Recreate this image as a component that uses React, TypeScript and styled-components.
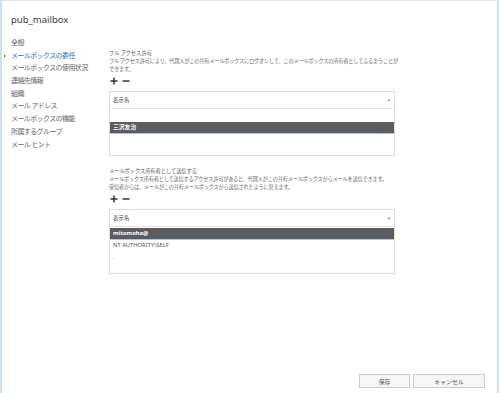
import React from 'react'
import styled, { createGlobalStyle } from 'styled-components'

const GlobalStyle = createGlobalStyle`
  html, body {
    margin: 0;
    padding: 0;
    background: #ffffff;
  }
  body {
    font-family: "Noto Sans", "Noto Sans CJK JP", sans-serif;
    color: #444444;
  }
`

const Frame = styled.div`
  box-sizing: border-box;
  width: 499px;
  height: 393px;
  display: flex;
  flex-direction: column;
  border-top: 1px solid #e4e4e4;
  border-left: 2px solid #cde1f3;
  border-right: 2px solid #cde1f3;
  background: #ffffff;
`

const Title = styled.div`
  margin: 12px 0 0 9px;
  height: 14px;
  line-height: 14px;
  font-size: 9.5px;
  color: #3a3a3a;
`

const Body = styled.div`
  display: flex;
  margin-top: 10px;
`

const Nav = styled.ul`
  list-style: none;
  margin: 0;
  padding: 0;
  width: 107px;
  flex-shrink: 0;
`

const NavItem = styled.li<{ $active?: boolean }>`
  position: relative;
  padding-left: 9px;
  height: 12.7px;
  line-height: 12.7px;
  font-size: 7px;
  letter-spacing: -0.6px;
  white-space: nowrap;
  color: ${({ $active }) => ($active ? '#2d6fba' : '#666666')};

  &::before {
    content: '';
    display: ${({ $active }) => ($active ? 'block' : 'none')};
    position: absolute;
    left: 2px;
    top: 5px;
    border-left: 2.5px solid #333333;
    border-top: 1.5px solid transparent;
    border-bottom: 1.5px solid transparent;
  }
`

const Content = styled.div`
  width: 286px;
  padding-top: 12px;
`

const Section = styled.section`
  & + & {
    margin-top: 11px;
  }
`

const SectionTitle = styled.div`
  font-size: 5.2px;
  line-height: 8px;
  color: #555555;
  white-space: nowrap;
`

const Description = styled.div`
  font-size: 5.2px;
  line-height: 8px;
  color: #666666;
  letter-spacing: -0.2px;
  white-space: nowrap;
`

const Toolbar = styled.div`
  display: flex;
  align-items: center;
  gap: 4px;
  height: 10px;
  margin: 3px 0 5px 1px;
`

const IconButton = styled.span`
  display: flex;
  width: 8px;
  height: 8px;
`

const Table = styled.div`
  box-sizing: border-box;
  height: 65px;
  border: 1px solid #dedede;
`

const HeaderRow = styled.div`
  display: flex;
  align-items: center;
  justify-content: space-between;
  height: 16px;
  padding: 0 4px 0 3px;
  border-bottom: 1px solid #e6e6e6;
  font-size: 5.5px;
  color: #444444;
`

const SortArrow = styled.span`
  width: 0;
  height: 0;
  border-left: 1.5px solid transparent;
  border-right: 1.5px solid transparent;
  border-bottom: 2px solid #555555;
`

const Rows = styled.div<{ $offset: number }>`
  padding-top: ${({ $offset }) => $offset}px;
`

const Row = styled.div<{ $selected?: boolean; $muted?: boolean }>`
  box-sizing: border-box;
  height: ${({ $selected }) => ($selected ? 12 : 13)}px;
  line-height: 11px;
  padding-left: 3px;
  font-size: 5.8px;
  white-space: nowrap;
  font-weight: ${({ $selected }) => ($selected ? 700 : 400)};
  color: ${({ $selected, $muted }) => ($selected ? '#ffffff' : $muted ? '#aaaaaa' : '#555555')};
  background: ${({ $selected }) => ($selected ? '#5b5b60' : 'transparent')};
  border-bottom: 1px solid ${({ $selected }) => ($selected ? '#a9c6e2' : 'transparent')};
`

const Footer = styled.div`
  display: flex;
  justify-content: flex-end;
  gap: 3px;
  margin-top: auto;
  padding: 0 12px 5px 0;
`

const Button = styled.button<{ $width: number }>`
  box-sizing: border-box;
  width: ${({ $width }) => $width}px;
  height: 14px;
  padding: 0;
  border: 1px solid #cccccc;
  background: #f6f6f6;
  font-family: "Noto Sans", "Noto Sans CJK JP", sans-serif;
  font-size: 5.8px;
  color: #555555;
`

const PlusIcon = () => (
  <svg width="8" height="8" viewBox="0 0 8 8">
    <path d="M4 0.5V7.5M0.5 4H7.5" stroke="#333" strokeWidth="1.5" />
  </svg>
)

const MinusIcon = () => (
  <svg width="8" height="8" viewBox="0 0 8 8">
    <path d="M0.5 4H7.5" stroke="#333" strokeWidth="1.5" />
  </svg>
)

const navItems = [
  '全般',
  'メールボックスの委任',
  'メールボックスの使用状況',
  '連絡先情報',
  '組織',
  'メール アドレス',
  'メールボックスの機能',
  '所属するグループ',
  'メール ヒント',
]

type Entry = { name: string; selected?: boolean; muted?: boolean }

const sections: { title: string; lines: string[]; offset: number; entries: Entry[] }[] = [
  {
    title: 'フル アクセス許可',
    lines: [
      'フル アクセス許可により、代理人がこの共有メールボックスにログオンして、このメールボックスの所有者としてふるまうことが',
      'できます。',
    ],
    offset: 13,
    entries: [{ name: '三沢友治', selected: true }],
  },
  {
    title: 'メールボックス所有者として送信する',
    lines: [
      'メールボックス所有者として送信するアクセス許可があると、代理人がこの共有メールボックスからメールを送信できます。',
      '受信者からは、メールがこの共有メールボックスから送信されたように見えます。',
    ],
    offset: 1,
    entries: [
      { name: 'mitomoha@', selected: true },
      { name: 'NT AUTHORITY\\SELF' },
      { name: '-', muted: true },
    ],
  },
]

const App: React.FunctionComponent = () => {
  return (
    <>
      <GlobalStyle />
      <Frame>
        <Title>pub_mailbox</Title>
        <Body>
          <Nav>
            {navItems.map((item, i) => (
              <NavItem key={item} $active={i === 1}>
                {item}
              </NavItem>
            ))}
          </Nav>
          <Content>
            {sections.map(section => (
              <Section key={section.title}>
                <SectionTitle>{section.title}</SectionTitle>
                <Description>
                  {section.lines.map(line => (
                    <div key={line}>{line}</div>
                  ))}
                </Description>
                <Toolbar>
                  <IconButton>
                    <PlusIcon />
                  </IconButton>
                  <IconButton>
                    <MinusIcon />
                  </IconButton>
                </Toolbar>
                <Table>
                  <HeaderRow>
                    <span>表示名</span>
                    <SortArrow />
                  </HeaderRow>
                  <Rows $offset={section.offset}>
                    {section.entries.map(entry => (
                      <Row key={entry.name} $selected={entry.selected} $muted={entry.muted}>
                        {entry.name}
                      </Row>
                    ))}
                  </Rows>
                </Table>
              </Section>
            ))}
          </Content>
        </Body>
        <Footer>
          <Button $width={51}>保存</Button>
          <Button $width={72}>キャンセル</Button>
        </Footer>
      </Frame>
    </>
  )
}

export default App
